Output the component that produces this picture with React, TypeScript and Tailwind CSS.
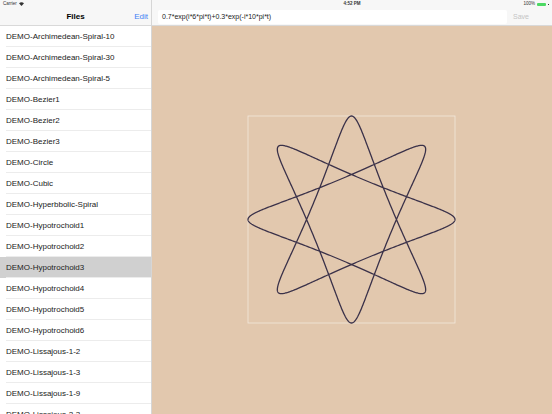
import React from "react";

const files = [
  "DEMO-Archimedean-Spiral-10",
  "DEMO-Archimedean-Spiral-30",
  "DEMO-Archimedean-Spiral-5",
  "DEMO-Bezier1",
  "DEMO-Bezier2",
  "DEMO-Bezier3",
  "DEMO-Circle",
  "DEMO-Cubic",
  "DEMO-Hyperbbolic-Spiral",
  "DEMO-Hypotrochoid1",
  "DEMO-Hypotrochoid2",
  "DEMO-Hypotrochoid3",
  "DEMO-Hypotrochoid4",
  "DEMO-Hypotrochoid5",
  "DEMO-Hypotrochoid6",
  "DEMO-Lissajous-1-2",
  "DEMO-Lissajous-1-3",
  "DEMO-Lissajous-1-9",
  "DEMO-Lissajous-2-3",
];

function curvePath(cx: number, cy: number, r: number) {
  const n = 1200;
  let d = "";
  for (let k = 0; k <= n; k++) {
    const t = k / n;
    const x = 0.7 * Math.cos(6 * Math.PI * t) + 0.3 * Math.cos(-10 * Math.PI * t);
    const y = 0.7 * Math.sin(6 * Math.PI * t) + 0.3 * Math.sin(-10 * Math.PI * t);
    d += `${k === 0 ? "M" : "L"}${(cx + x * r).toFixed(2)},${(cy - y * r).toFixed(2)}`;
  }
  return d + "Z";
}

export default function App() {
  const path = curvePath(199.5, 193.5, 103.5);

  return (
    <div
      className="flex h-[414px] w-[552px] overflow-hidden bg-white text-black"
      style={{ fontFamily: '"Liberation Sans", Arial, sans-serif' }}
    >
      {/* sidebar */}
      <div className="flex w-[152px] shrink-0 flex-col border-r border-[#d6d6d6]">
        <div className="relative h-[26px] shrink-0 border-b border-[#d9d9d9] bg-[#f7f7f7]">
          <div className="absolute left-[3px] top-[1px] flex items-center gap-[2px] text-[4.5px] text-[#333]">
            <span>Carrier</span>
            <svg width="5" height="4" viewBox="0 0 10 8">
              <path d="M5 8 L0 2.5 Q5 -1.5 10 2.5 Z" fill="#333" />
            </svg>
          </div>
          <div className="absolute inset-x-0 top-[13px] text-center text-[8px] font-bold leading-none">Files</div>
          <div className="absolute right-[3px] top-[13px] text-[8px] leading-none text-[#3f7ff5]">Edit</div>
        </div>
        <div className="flex flex-col">
          {files.map((f) => (
            <div
              key={f}
              className={`flex h-[21px] shrink-0 items-center pl-[6px] ${
                f === "DEMO-Hypotrochoid3" ? "bg-[#d0d0d0]" : "bg-white"
              }`}
            >
              <div className="flex h-full w-full items-center border-b border-[#ececec] pt-[1px] text-[8px] text-[#222]">
                {f}
              </div>
            </div>
          ))}
        </div>
      </div>

      {/* main */}
      <div className="flex flex-1 flex-col">
        <div className="relative h-[26px] shrink-0 border-b border-[#d9d9d9] bg-[#f7f7f7]">
          <div className="absolute inset-x-0 top-[1px] text-center text-[4.5px] font-bold text-[#333]">4:52 PM</div>
          <div className="absolute right-[3px] top-[1px] flex items-center gap-[2px] text-[4.5px] text-[#333]">
            <span>100%</span>
            <div className="h-[3px] w-[9px] rounded-[1px] bg-[#4cd964]" />
            <div className="h-[1.5px] w-[1px] bg-[#333]" />
          </div>
          <div className="absolute left-[6px] right-[45px] top-[10px] flex h-[14px] items-center rounded-[2px] bg-white pl-[4px] text-[7px] text-[#222]">
            0.7*exp(i*6*pi*t)+0.3*exp(-i*10*pi*t)
          </div>
          <div className="absolute right-[23px] top-[13px] text-[7px] leading-none text-[#c4c4c4]">Save</div>
        </div>
        <div className="flex-1 bg-[#e2c8ae]">
          <svg width="400" height="388" viewBox="0 0 400 388">
            <rect x="96" y="90" width="207" height="207" fill="none" stroke="#f3e8dd" strokeWidth="0.8" />
            <path d={path} fill="none" stroke="#3a3149" strokeWidth="1.3" strokeLinejoin="round" />
          </svg>
        </div>
      </div>
    </div>
  );
}
